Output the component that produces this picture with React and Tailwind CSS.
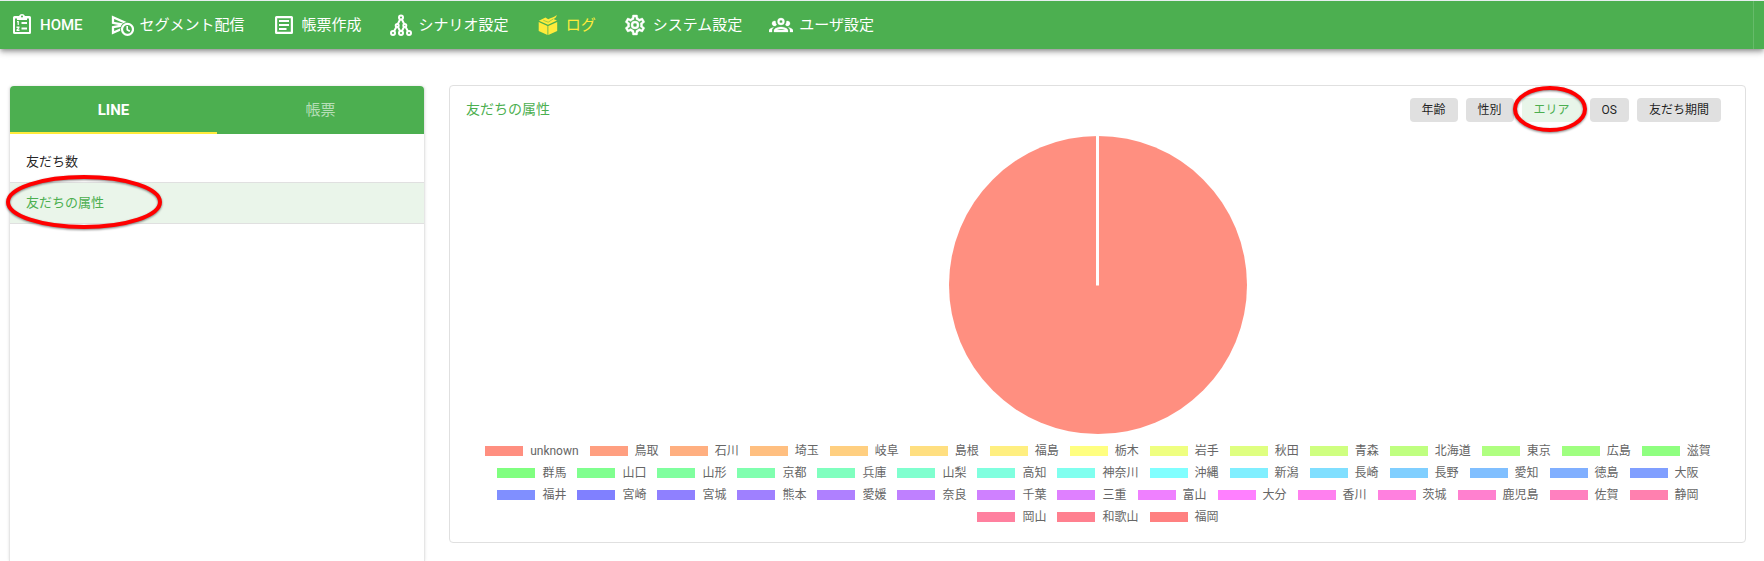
import React from "react";

const NAV_ITEMS = [
  { label: "HOME", icon: "clipboard" },
  { label: "セグメント配信", icon: "sendClock" },
  { label: "帳票作成", icon: "textBox" },
  { label: "シナリオ設定", icon: "tree" },
  { label: "ログ", icon: "box", active: true },
  { label: "システム設定", icon: "cog" },
  { label: "ユーザ設定", icon: "group" },
];

const FILTERS = ["年齢", "性別", "エリア", "OS", "友だち期間"];

const AREAS = [
  "unknown", "鳥取", "石川", "埼玉", "岐阜", "島根", "福島", "栃木", "岩手", "秋田",
  "青森", "北海道", "東京", "広島", "滋賀", "群馬", "山口", "山形", "京都", "兵庫",
  "山梨", "高知", "神奈川", "沖縄", "新潟", "長崎", "長野", "愛知", "徳島", "大阪",
  "福井", "宮崎", "宮城", "熊本", "愛媛", "奈良", "千葉", "三重", "富山", "大分",
  "香川", "茨城", "鹿児島", "佐賀", "静岡", "岡山", "和歌山", "福岡",
];

// Hues are spread evenly round the wheel, one step per area.
const areaColor = (index) => `hsl(${((index + 1) * 360) / AREAS.length} 100% 75%)`;

const ICONS = {
  clipboard: (
    <g>
      <path
        fillRule="evenodd"
        d="M19.500 3H15a3.200 3.200 0 0 0-6 0H4.500A1.500 1.500 0 0 0 3 4.500v15A1.500 1.500 0 0 0 4.500 21h15a1.500 1.500 0 0 0 1.500-1.500v-15A1.500 1.500 0 0 0 19.500 3M12 2.500a1 1 0 1 1 0 2 1 1 0 0 1 0-2M19 19H5V5.500h2V7h10V5.500h2z"
      />
      <path d="M11.500 9H17v2h-5.500zM11.500 14.500H17v2h-5.500z" />
      <path d="M7 8h1.800v4H7.600V9.300H7zM6.500 13.500h3V15l-1.400 1.500h1.400V18h-3v-1.500L8 15H6.500z" />
    </g>
  ),
  sendClock: (
    <g>
      <path
        d="M3 4.200v5.600l12 2.200-12 2.200v5.600L20.500 12z"
        fill="none"
        stroke="currentColor"
        strokeWidth="2.300"
      />
      <circle cx="17.500" cy="16.300" r="7.400" fill="#4caf50" />
      <circle cx="17.500" cy="16.300" r="5.500" fill="none" stroke="currentColor" strokeWidth="2.200" />
      <path d="M17.200 13v3.700l2.600 1.600" fill="none" stroke="currentColor" strokeWidth="1.600" />
    </g>
  ),
  textBox: (
    <path d="M4.500 3A1.500 1.500 0 0 0 3 4.500v15A1.500 1.500 0 0 0 4.500 21h15a1.500 1.500 0 0 0 1.500-1.500v-15A1.500 1.500 0 0 0 19.500 3h-15m.7 2.200h13.600v13.600H5.200V5.200m1.800 1.800v2h10V7H7m0 4v2h10v-2H7m0 4v2h7.500v-2H7Z" />
  ),
  tree: (
    <g fill="none" stroke="currentColor" strokeWidth="2">
      <circle cx="12" cy="4.500" r="2" />
      <circle cx="8.200" cy="12.500" r="1.500" />
      <circle cx="15.800" cy="12.500" r="1.500" />
      <circle cx="4" cy="20" r="2" />
      <circle cx="12" cy="20" r="2" />
      <circle cx="20" cy="20" r="2" />
      <path d="M11.200 6.300 8.800 11M12.800 6.300l2.400 4.700M7.400 14 5 18.200M9 14l2.200 4.200M16.600 14l2.400 4.200M15 14l-2.200 4.200" />
    </g>
  ),
  box: (
    <g>
      <path d="M2.700 8.900 11.500 12.900V22L2.700 18zM12.300 12.900 21.200 8.900V18L12.300 22z" />
      <path d="M2.900 7.700 9.500 4.600l2.700 1.600C15 4.700 18 4.400 20.800 2c-.3 2.300-2 3.700-3.400 4.100l3.600 1.500L12 11.800z" />
      <path d="M7.300 7.300 12.200 9.200 17.200 6" fill="none" stroke="#4caf50" strokeWidth=".5" />
    </g>
  ),
  cog: (
    <path
      stroke="currentColor"
      strokeWidth=".4"
      d="M12,8A4,4 0 0,1 16,12A4,4 0 0,1 12,16A4,4 0 0,1 8,12A4,4 0 0,1 12,8M12,10A2,2 0 0,0 10,12A2,2 0 0,0 12,14A2,2 0 0,0 14,12A2,2 0 0,0 12,10M10,22C9.75,22 9.54,21.82 9.5,21.58L9.13,18.93C8.5,18.68 7.96,18.34 7.44,17.94L4.95,18.95C4.73,19.03 4.46,18.95 4.34,18.73L2.34,15.27C2.21,15.05 2.27,14.78 2.46,14.63L4.57,12.97L4.5,12L4.57,11L2.46,9.37C2.27,9.22 2.21,8.95 2.34,8.73L4.34,5.27C4.46,5.05 4.73,4.96 4.95,5.05L7.44,6.05C7.96,5.66 8.5,5.32 9.13,5.07L9.5,2.42C9.54,2.18 9.75,2 10,2H14C14.25,2 14.46,2.18 14.5,2.42L14.87,5.07C15.5,5.32 16.04,5.66 16.56,6.05L19.05,5.05C19.27,4.96 19.54,5.05 19.66,5.27L21.66,8.73C21.79,8.95 21.73,9.22 21.54,9.37L19.43,11L19.5,12L19.43,13L21.54,14.63C21.73,14.78 21.79,15.05 21.66,15.27L19.66,18.73C19.54,18.95 19.27,19.04 19.05,18.95L16.56,17.95C16.04,18.34 15.5,18.68 14.87,18.93L14.5,21.58C14.46,21.82 14.25,22 14,22H10M11.25,4L10.88,6.61C9.68,6.86 8.62,7.5 7.85,8.39L5.44,7.35L4.69,8.65L6.8,10.2C6.4,11.37 6.4,12.64 6.8,13.8L4.68,15.36L5.43,16.66L7.86,15.62C8.63,16.5 9.68,17.14 10.87,17.38L11.24,20H12.76L13.13,17.39C14.32,17.14 15.37,16.5 16.14,15.62L18.57,16.66L19.32,15.36L17.2,13.81C17.6,12.64 17.6,11.37 17.2,10.2L19.31,8.65L18.56,7.35L16.15,8.39C15.38,7.5 14.32,6.86 13.12,6.62L12.75,4H11.25Z"
    />
  ),
  group: (
    <path
      stroke="currentColor"
      strokeWidth=".3"
      d="M12,5A3.5,3.5 0 0,0 8.5,8.5A3.5,3.5 0 0,0 12,12A3.5,3.5 0 0,0 15.5,8.5A3.5,3.5 0 0,0 12,5M12,7A1.5,1.5 0 0,1 13.5,8.5A1.5,1.5 0 0,1 12,10A1.5,1.5 0 0,1 10.5,8.5A1.5,1.5 0 0,1 12,7M5.5,8A2.5,2.5 0 0,0 3,10.5C3,11.44 3.53,12.25 4.29,12.68C4.65,12.88 5.06,13 5.5,13C5.94,13 6.35,12.88 6.71,12.68C7.08,12.47 7.39,12.17 7.62,11.81C6.89,10.86 6.5,9.7 6.5,8.5C6.5,8.41 6.5,8.31 6.5,8.22C6.2,8.08 5.86,8 5.5,8M18.5,8C18.14,8 17.8,8.08 17.5,8.22C17.5,8.31 17.5,8.41 17.5,8.5C17.5,9.7 17.11,10.86 16.38,11.81C16.5,12 16.63,12.15 16.78,12.3C16.94,12.45 17.1,12.58 17.29,12.68C17.65,12.88 18.06,13 18.5,13C18.94,13 19.35,12.88 19.71,12.68C20.47,12.25 21,11.44 21,10.5A2.5,2.5 0 0,0 18.5,8M12,14C9.66,14 5,15.17 5,17.5V19H19V17.5C19,15.17 14.34,14 12,14M4.71,14.55C2.78,14.78 0,15.76 0,17.5V19H3V17.07C3,16.06 3.69,15.22 4.71,14.55M19.29,14.55C20.31,15.22 21,16.06 21,17.07V19H24V17.5C24,15.76 21.22,14.78 19.29,14.55M12,16C13.53,16 15.24,16.5 16.23,17H7.77C8.76,16.5 10.47,16 12,16Z"
    />
  ),
};

function Icon({ name }) {
  return (
    <svg viewBox="0 0 24 24" className="size-6 shrink-0" fill="currentColor" aria-hidden="true">
      {ICONS[name]}
    </svg>
  );
}

function Header() {
  return (
    <header className="z-10 border-t border-[#e8eef0] bg-[#4caf50] pr-[10px] shadow-[0_2px_4px_-1px_rgba(0,0,0,0.3),0_4px_5px_0_rgba(0,0,0,0.16),0_1px_10px_0_rgba(0,0,0,0.12)]">
      <nav className="flex h-12 items-center gap-[27px] border-r border-[#66bb6a] pl-[10px]">
        {NAV_ITEMS.map((item) => (
          <a
            key={item.label}
            href="#"
            className={`flex items-center gap-[6px] text-[15px] leading-6 whitespace-nowrap ${
              item.active ? "text-[#ffeb3b]" : "text-white"
            } ${item.label === "HOME" ? "font-medium" : "font-normal"}`}
          >
            <Icon name={item.icon} />
            {item.label}
          </a>
        ))}
      </nav>
    </header>
  );
}

// Red ring that lies over the item it highlights.
function Ring({ width, height, className }) {
  return (
    <svg
      width={width}
      height={height}
      viewBox={`0 0 ${width} ${height}`}
      className={`pointer-events-none absolute z-10 max-w-none overflow-visible drop-shadow-[0_1px_1px_rgba(0,0,0,0.5)] ${className}`}
      aria-hidden="true"
    >
      <ellipse
        cx={width / 2}
        cy={height / 2}
        rx={width / 2 - 2}
        ry={height / 2 - 2}
        fill="none"
        stroke="#ff0000"
        strokeWidth="4"
      />
    </svg>
  );
}

function Sidebar() {
  return (
    <aside className="mt-px w-[416px] shrink-0 rounded-t border-x border-[#e6e6e6] shadow-[0_0_3px_rgba(0,0,0,0.12)]">
      <div role="tablist" className="flex h-12 overflow-hidden rounded-t bg-[#4caf50] text-[15px]">
        <button role="tab" aria-selected="true" className="flex-1 border-b-2 border-[#ffeb3b] pt-[2px] font-bold text-white">
          LINE
        </button>
        <button role="tab" aria-selected="false" className="flex-1 text-white/60">
          帳票
        </button>
      </div>
      <ul className="pt-2 text-[13px] leading-10">
        <li className="border-b border-[#e0e0e0]">
          <button className="block w-full px-4 text-left text-black/87">友だち数</button>
        </li>
        <li className="relative border-b border-[#e0e0e0] bg-[#eaf5ea]">
          <button className="block w-full px-4 text-left text-[#4caf50]">友だちの属性</button>
          <Ring width={156} height={54} className="-top-2 -left-1" />
        </li>
      </ul>
    </aside>
  );
}

function Pie() {
  return (
    <svg viewBox="0 0 298 298" className="mx-auto mt-[14px] block size-[298px]" role="img" aria-label="エリア">
      <circle cx="149" cy="149" r="149" fill={areaColor(0)} />
      <path d="M148.500 0V149.500" stroke="#fff" strokeWidth="3" />
    </svg>
  );
}

function Legend() {
  return (
    <ul className="mt-[6px] flex flex-wrap justify-center gap-x-[10px] text-[12px] leading-[22px] text-[#666]">
      {AREAS.map((area, index) => (
        <li key={area} className="flex items-center gap-[7px]">
          <span className="ml-px h-[10px] w-[38px]" style={{ backgroundColor: areaColor(index) }} />
          {area}
        </li>
      ))}
    </ul>
  );
}

export default function App() {
  return (
    <div className="flex h-screen flex-col overflow-hidden bg-white font-['Roboto','Noto_Sans_CJK_JP',sans-serif]">
      <Header />
      <main className="flex min-h-0 flex-1 gap-6 pt-9 pr-[18px] pl-[9px]">
        <Sidebar />
        <section className="min-w-0 flex-1 self-start rounded border border-[#e0e0e0] px-4 pt-3 pb-[14px]">
          <div className="flex items-start justify-between pr-2">
            <h1 className="text-sm leading-[22px] text-[#4caf50]">友だちの属性</h1>
            <div className="flex gap-2 text-xs leading-6">
              {FILTERS.map((label) => {
                const selected = label === "エリア";
                return (
                  <button
                    key={label}
                    aria-pressed={selected}
                    className={`relative rounded px-3 ${
                      selected ? "bg-[#e8f5e9] text-[#4caf50]" : "bg-[#e0e0e0] text-black/87"
                    }`}
                  >
                    {label}
                    {selected && (
                      <Ring width={74} height={46} className="-top-3 -left-[9px]" />
                    )}
                  </button>
                );
              })}
            </div>
          </div>
          <Pie />
          <Legend />
        </section>
      </main>
    </div>
  );
}
